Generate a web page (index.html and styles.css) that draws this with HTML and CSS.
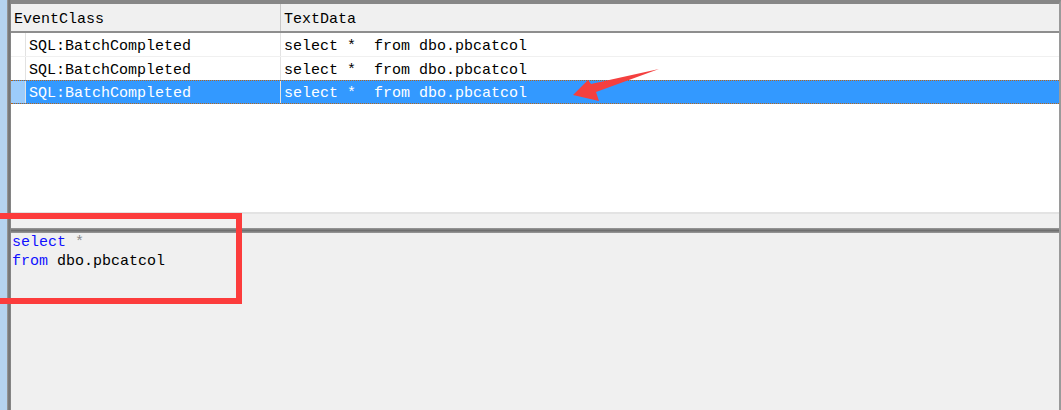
FILE: index.html
```html
<!DOCTYPE html>
<html lang="en">
<head>
  <meta charset="UTF-8">
  <title>Trace</title>
  <link rel="stylesheet" href="styles.css">
</head>
<body>

  <div class="window">
    <div class="edge"></div>
    <div class="frame-line"></div>

    <div class="panel">
      <!-- Event grid -->
      <div class="grid">
        <div class="grid-head">
          <div class="cell head-class">EventClass</div>
          <div class="cell head-text">TextData</div>
        </div>

        <div class="row">
          <div class="selector"></div>
          <div class="cell col-class">SQL:BatchCompleted</div>
          <div class="cell col-text">select *  from dbo.pbcatcol</div>
        </div>
        <div class="row">
          <div class="selector"></div>
          <div class="cell col-class">SQL:BatchCompleted</div>
          <div class="cell col-text">select *  from dbo.pbcatcol</div>
        </div>
        <div class="row selected">
          <div class="selector"></div>
          <div class="cell col-class">SQL:BatchCompleted</div>
          <div class="cell col-text">select *  from dbo.pbcatcol</div>
        </div>
      </div>

      <div class="grid-foot"></div>
      <div class="splitter"></div>

      <!-- Statement text -->
      <div class="detail">
        <div><span class="kw">select</span> <span class="op">*</span></div>
        <div><span class="kw">from</span> dbo.pbcatcol</div>
      </div>
    </div>

    <!-- Annotations -->
    <div class="mark-box"></div>
    <svg class="mark-arrow" width="1061" height="410" viewBox="0 0 1061 410">
      <polygon points="573,95 588,80 591,84 659,69 596,92 599,101" fill="#f4403f"/>
    </svg>
  </div>

</body>
</html>
```

FILE: styles.css
```css
body {
  margin: 0;
  background: #f0f0f0;
  font-family: "Liberation Mono", "DejaVu Sans Mono", monospace;
  font-size: 15px;
  color: #000;
}

.window {
  position: relative;
  display: flex;
  width: 1061px;
  height: 410px;
  overflow: hidden;
}

.edge {
  width: 7px;
  background: #b5d3ef;
}

.frame-line {
  width: 4px;
  background: linear-gradient(90deg, #a0a0a0 0, #6e6e6e 50%, #8c8c8c 100%);
}

.panel {
  flex: 1;
  display: flex;
  flex-direction: column;
  border-top: 4px solid #878787;
  border-right: 2px solid #9a9a9a;
}

.grid {
  height: 208px;
  background: #fff;
}

.grid-head {
  display: flex;
  height: 27px;
  background: #f0f0f0;
  border-bottom: 2px solid #8e8e8e;
}

.grid-head .cell {
  line-height: 27px;
  padding-top: 2px;
  height: 25px;
}

.head-class {
  width: 266px;
  padding-left: 3px;
  border-right: 1px solid #c8c8c8;
}

.head-text {
  padding-left: 3px;
}

.row {
  display: flex;
  height: 23px;
  line-height: 23px;
  border-bottom: 1px solid #f0f0f0;
}

.row .cell {
  padding-top: 2px;
  height: 21px;
}

.selector {
  width: 14px;
  border-right: 1px solid #e2e2e2;
}

.col-class {
  width: 251px;
  padding-left: 3px;
  border-right: 1px solid #e2e2e2;
}

.col-text {
  padding-left: 3px;
}

.cell {
  white-space: pre;
}

.row.selected {
  background: #3399ff;
  color: #fff;
  border-top: 1px dotted #b5651d;
  border-bottom: 1px dotted #b5651d;
  height: 22px;
  line-height: 22px;
  margin-top: -1px;
}

.row.selected .cell {
  height: 20px;
}

.row.selected .selector {
  background: #9cccfb;
}

.grid-foot {
  height: 14px;
  border-top: 2px solid #e3e3e3;
  background: #f0f0f0;
}

.splitter {
  height: 5px;
  background: linear-gradient(180deg, #9a9a9a 0, #6f6f6f 50%, #9a9a9a 100%);
}

.detail {
  flex: 1;
  padding: 0 0 0 1px;
  line-height: 19px;
}

.kw {
  color: #1010ff;
}

.op {
  color: #8a8a8a;
}

.mark-box {
  position: absolute;
  left: -12px;
  top: 213px;
  width: 242px;
  height: 79px;
  border: 6px solid #fc3c3c;
}

.mark-arrow {
  position: absolute;
  left: 0;
  top: 0;
}
```
